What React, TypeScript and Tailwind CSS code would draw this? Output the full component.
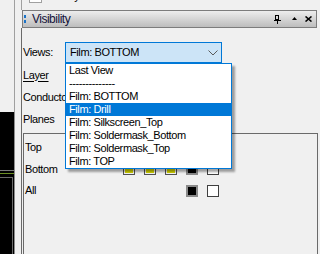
import React from "react";

const items = [
  "Last View",
  "--------------",
  "Film: BOTTOM",
  "Film: Drill",
  "Film: Silkscreen_Top",
  "Film: Soldermask_Bottom",
  "Film: Soldermask_Top",
  "Film: TOP",
];

function YellowBox() {
  return (
    <div className="flex h-[12px] w-[12px] flex-col border border-[#505050] bg-[#f4f4f4] p-px">
      <div className="flex-1 bg-[#d6d600]" />
    </div>
  );
}
function BlackBox() {
  return <div className="h-[12px] w-[12px] border-2 border-[#8a8a8a] bg-black" />;
}
function WhiteBox() {
  return <div className="h-[12px] w-[12px] border border-[#404040] bg-white" />;
}

export default function App() {
  return (
    <div className="relative flex h-[254px] w-[320px] overflow-hidden bg-[#f0f0f0] font-['Liberation_Sans',Arial,sans-serif] text-[11px] leading-none tracking-[-0.4px] text-black">
      {/* left strip */}
      <div className="flex w-[15px] flex-col">
        <div className="h-[112px] border-r border-[#a0a0a0]" />
        <div className="flex flex-1 flex-col border-r border-[#8c8c8c] bg-black">
          <div className="h-[58px]" />
          <div className="h-px bg-[#7a7a7a]" />
          <div className="h-[2px]" />
          <div className="h-px bg-[#6b8e23]" />
          <div className="mr-px mt-[3px] flex-1 border-r border-t border-[#6a6a6a]" />
        </div>
      </div>
      <div className="w-[6px]" />

      {/* main column */}
      <div className="flex w-[297px] flex-col">
        {/* cut-off tree row */}
        <div className="h-[10px] overflow-hidden border-l border-[#a0a0a0]">
          <div className="-mt-[10px] flex h-[13px] items-center pl-[7px]">
            <div className="h-[13px] w-[13px] border border-[#a0a0a0] bg-white" />
            <span className="ml-[4px]">Find by Name</span>
          </div>
        </div>

        {/* title bar */}
        <div className="ml-px flex h-[18px] w-[295px] items-center border border-[#7c7c7c] bg-linear-to-b from-[#ededed] to-[#bdbdbd] pl-px pr-[4px]">
          <div className="flex flex-col gap-[2px]">
            <div className="h-[3px] w-[2px] bg-[#1a73c8]" />
            <div className="h-[3px] w-[2px] bg-[#1a73c8]" />
          </div>
          <span className="ml-[6px] text-[12px] tracking-[-0.5px] text-[#14143a]">Visibility</span>
          <div className="ml-auto flex items-center">
            <svg width="7" height="9" viewBox="0 0 7 9" className="mt-[1px]">
              <rect x="1.5" y="0.5" width="3" height="4" fill="none" stroke="black" />
              <rect x="4" y="0" width="1" height="5" fill="black" />
              <line x1="0" y1="5.5" x2="7" y2="5.5" stroke="black" />
              <line x1="3.5" y1="5" x2="3.5" y2="9" stroke="black" />
            </svg>
            <svg width="5" height="3" viewBox="0 0 5 3" className="ml-[11px] -mt-[2px]">
              <polygon points="0,3 2.5,0 5,3" fill="black" />
            </svg>
            <svg width="7" height="6" viewBox="0 0 7 6" className="ml-[8px] -mt-[1px]">
              <path d="M0.5 0.5 L6.5 5.5 M6.5 0.5 L0.5 5.5" stroke="black" strokeWidth="1.6" />
            </svg>
          </div>
        </div>

        {/* body */}
        <div className="flex flex-1 flex-col border-l border-[#6a6a6a] pt-[14px]">
          <div className="flex h-[21px] items-center">
            <div className="w-[43px] pl-px">Views:</div>
            <div className="flex h-[21px] w-[157px] items-center justify-between border border-[#0078d7] bg-[#cce4f7] pl-[4px] pr-[3px]">
              <span>Film: BOTTOM</span>
              <svg width="10" height="6" viewBox="0 0 10 6">
                <polyline points="0.5,0.5 5,5 9.5,0.5" fill="none" stroke="#5a5a5a" strokeWidth="1" />
              </svg>
            </div>
          </div>
          <div className="mt-px flex h-[22px] items-center pl-px">
            <span className="underline underline-offset-2">Layer</span>
          </div>
          <div className="flex h-[22px] items-center pl-px">Conductors</div>
          <div className="flex h-[22px] items-center pl-px">Planes</div>

          <div className="ml-px mt-[3px] flex w-[295px] flex-1 flex-col border-l border-r border-t border-[#6a6a6a] pt-[2px]">
            <div className="flex h-[22px] items-center">
              <div className="w-[99px] pl-px">Top</div>
              <div className="flex gap-[9px]">
                <YellowBox />
                <YellowBox />
                <YellowBox />
                <BlackBox />
                <WhiteBox />
              </div>
            </div>
            <div className="flex h-[22px] items-center">
              <div className="w-[99px] pl-px">Bottom</div>
              <div className="flex gap-[9px]">
                <YellowBox />
                <YellowBox />
                <YellowBox />
                <BlackBox />
                <WhiteBox />
              </div>
            </div>
            <div className="flex h-[21px] items-center">
              <div className="w-[162px] pl-px">All</div>
              <div className="flex gap-[9px]">
                <BlackBox />
                <WhiteBox />
              </div>
            </div>
          </div>
        </div>
      </div>

      {/* open dropdown list */}
      <div className="absolute left-[65px] top-[63px] flex w-[167px] flex-col border border-[#0078d7] bg-white shadow-[3px_3px_2px_rgba(0,0,0,0.35)]">
        {items.map((it) => (
          <div
            key={it}
            className={
              it === "Film: Drill"
                ? "flex h-[13px] items-center bg-[#0078d7] pl-[3px] text-white"
                : "flex h-[13px] items-center pl-[3px]"
            }
          >
            {it}
          </div>
        ))}
      </div>
    </div>
  );
}
